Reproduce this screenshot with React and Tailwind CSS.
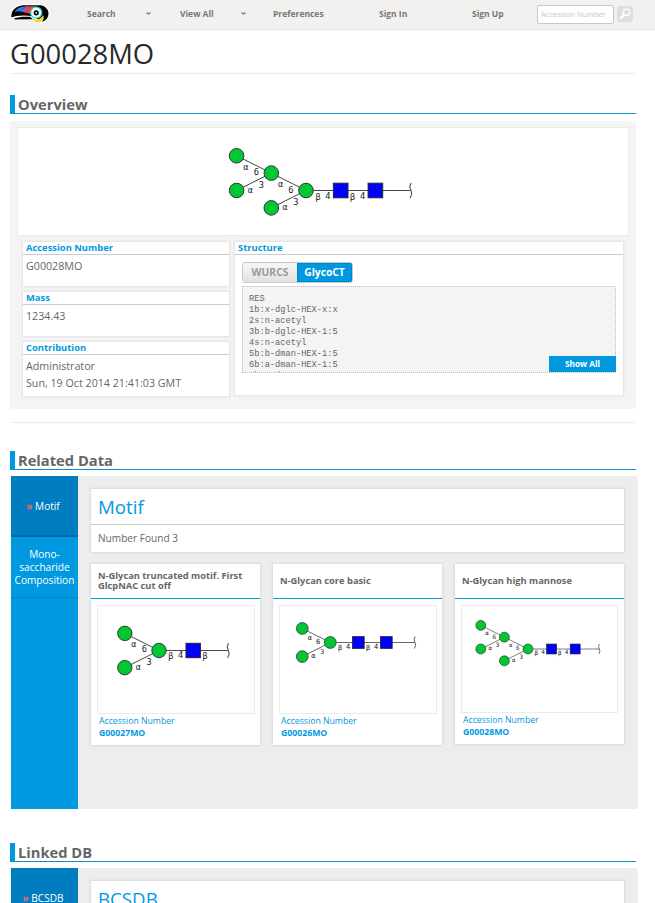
const ALPHA = "α";
const BETA = "β";

// Coordinates are relative to the core mannose at (0, 0), one residue every 34.7 units.
const branch = (x, y) => [
  { t: ALPHA, x: x - 25.5, y: y - 6.5 },
  { t: "6", x: x - 15, y: y - 1 },
  { t: ALPHA, x: x - 21, y: y + 16.5 },
  { t: "3", x: x - 10, y: y + 11.5 },
];

function Glycan({ width, height, x, y, scale, squares = 2, extended = false }) {
  const end = squares === 1 ? 70 : 104.5;
  const lines = [
    [-34.7, -17.4, 0, 0],
    [-34.7, 17.4, 0, 0],
    [0, 0, end, 0],
  ];
  const circles = [
    [-34.7, -17.4],
    [-34.7, 17.4],
    [0, 0],
  ];
  let labels = [...branch(0, 0), { t: BETA, x: 12, y: 6 }, { t: "4", x: 22, y: 5 }, { t: BETA, x: 46.7, y: 6 }];
  if (squares === 2) labels.push({ t: "4", x: 56.7, y: 5 });
  if (extended) {
    lines.push([-69.4, -34.7, -34.7, -17.4], [-69.4, 0, -34.7, -17.4]);
    circles.push([-69.4, -34.7], [-69.4, 0]);
    labels = labels.concat(branch(-34.7, -17.4));
  }
  return (
    <svg width={width} height={height} className="block">
      <g transform={`translate(${x} ${y}) scale(${scale})`}>
        {lines.map(([a, b, c, d], i) => (
          <line key={i} x1={a} y1={b} x2={c} y2={d} stroke="#444" strokeWidth="1" />
        ))}
        {circles.map(([a, b], i) => (
          <circle key={i} cx={a} cy={b} r="7.3" fill="#00c832" stroke="#333" strokeWidth="1" />
        ))}
        {Array.from({ length: squares }, (_, i) => (
          <rect key={i} x={34.7 * (i + 1) - 7.3} y="-7.3" width="14.6" height="14.6" fill="#0000fa" stroke="#223" strokeWidth="1" />
        ))}
        <path d={`M${end + 0.5} -7.5 q-2.500 4 0 7.500 q2 4 -1 7.500`} fill="none" stroke="#333" strokeWidth="1" />
        {labels.map((l, i) => (
          <text key={i} x={l.x} y={l.y + 3} textAnchor="middle" fontSize={l.t === ALPHA || l.t === BETA ? 8.6 : 8.8} fill="#222" className="font-['DejaVu_Sans_Mono',monospace]">
            {l.t}
          </text>
        ))}
      </g>
    </svg>
  );
}

function Logo() {
  return (
    <svg width="40" height="20" viewBox="0 0 40 20" className="block">
      <path d="M.5 14.500 C0 5 6 1 13 .3 L31 .3 C37 1.500 39.700 5 39.500 10 C39 15 36 18 32 19.500 L27 19 C24 17.500 22 16.800 20 16.500 L3 16 Z" fill="#fff" />
      <path d="M1.300 13.500 C1 6 6 2 13 1.200 L31 1.200 C36 2.500 38.800 6 38.500 10 C38 14.500 35.500 16.800 32.500 17.500 L22 12 C14 10.800 5 11.500 1.300 13.500 Z" fill="#050505" />
      <path d="M3.500 14.800 C8 12.800 14 12.500 20 12.800 L23 15.300 L5 15.600 Z" fill="#050505" />
      <path d="M4.500 8 C7 4 11 2.600 16 2.200 C14 4 13 5 11.500 7.500 C9 7 6.500 7 4.500 8 Z" fill="#1687e8" />
      <path d="M16 2.200 L19.500 2.200 C17.500 4 18 5.500 15.500 8.500 L10.500 7.500 C13 6.500 13.500 4 16 2.200 Z" fill="#b44cc8" />
      <path d="M19.500 2.200 L27 2.200 C23 3.500 20.500 6 20.500 10 L14.500 8.300 C17 6.500 17 4 19.500 2.200 Z" fill="#f3422d" />
      <path d="M22.500 14.500 C27 17 31 15 33 11 C35 15.500 32.500 18.300 28.500 18.300 C25 18.300 23.500 17 22.500 14.500 Z" fill="#ffd91d" />
      <circle cx="26.200" cy="8.600" r="5.600" fill="#e8ffff" stroke="#16d6df" strokeWidth="1.200" />
      <circle cx="26.200" cy="8.800" r="2.600" fill="#060606" />
      <rect x="25.500" y="8" width="1.500" height="1.500" fill="#fff" />
    </svg>
  );
}

function NavArrow() {
  return (
    <svg width="5" height="4" viewBox="0 0 5 4" className="block">
      <path d="M.5 .5 L2.500 2 L4.500 .5" fill="none" stroke="#777" strokeWidth="1.300" />
    </svg>
  );
}

function Header() {
  return (
    <header className="flex h-[30px] items-start border-b border-[#e6e5e4] bg-[#f2f1ef] text-[8.5px] font-bold leading-[12px] text-[#777]">
      <div className="ml-[10px] mt-[4px] w-[77px]"><Logo /></div>
      <div className="mt-[8px] w-[59px]">Search</div>
      <div className="mt-[12px] w-[34px]"><NavArrow /></div>
      <div className="mt-[8px] w-[61px]">View All</div>
      <div className="mt-[12px] w-[32px]"><NavArrow /></div>
      <div className="mt-[8px] w-[106px]">Preferences</div>
      <div className="mt-[8px] w-[93px]">Sign In</div>
      <div className="mt-[8px] w-[65px]">Sign Up</div>
      <div className="mt-[5px] h-[19px] w-[77px] rounded-[2px] border border-[#c8c8c8] bg-white pl-[3px] text-[7.4px] font-normal leading-[17px] text-[#c6c6c6]">Accession Number</div>
      <div className="ml-[3px] mt-[6px] flex size-[16px] items-center justify-center rounded-[2px] bg-[#dedede]">
        <svg width="12" height="12" viewBox="0 0 12 12">
          <circle cx="7.500" cy="4.300" r="3.200" fill="none" stroke="#fff" strokeWidth="1.400" />
          <path d="M5 6.800 L1 10.800" stroke="#fff" strokeWidth="2.200" />
        </svg>
      </div>
    </header>
  );
}

function Heading({ children }) {
  return (
    <h2 className="ml-[10px] h-[19px] w-[626px] border-b border-[#0a8fd0] text-[14.7px] font-bold leading-[18px] text-[#666]">
      <span className="block h-[19px] border-l-[5px] border-[#0099df] pl-[3px]">{children}</span>
    </h2>
  );
}

const cardShadow = "bg-white shadow-[0_0_2px_1px_rgba(0,0,0,0.08)]";

function Field({ title, className, children }) {
  return (
    <div className={`w-[206px] ${cardShadow} ${className}`}>
      <h3 className="h-[13px] border-b border-[#ccc] pl-[3px] text-[9.4px] font-bold leading-[12px] text-[#0099df]">{title}</h3>
      <div className="pl-[3px] pt-[3px] text-[10.7px] leading-[17px] text-[#666]">{children}</div>
    </div>
  );
}

const glycoCt = `RES
1b:x-dglc-HEX-x:x
2s:n-acetyl
3b:b-dglc-HEX-1:5
4s:n-acetyl
5b:b-dman-HEX-1:5
6b:a-dman-HEX-1:5
7b:a-dman-HEX-1:5`;

function Overview() {
  return (
    <section className="ml-[10px] mt-[7px] h-[288px] w-[626px] rounded-[3px] bg-[#f4f4f4] pt-[6px]">
      <div className="ml-[7px] h-[109px] w-[612px] border border-[#ebebeb] bg-white">
        <Glycan width={610} height={107} x={288} y={62.5} scale={1} extended />
      </div>
      <div className="ml-[13px] mt-[6px] flex gap-[6px]">
        <div className="flex flex-col gap-[6px]">
          <Field title="Accession Number" className="h-[44px]">G00028MO</Field>
          <Field title="Mass" className="h-[44px]">1234.43</Field>
          <Field title="Contribution" className="h-[54px]">Administrator<br />Sun, 19 Oct 2014 21:41:03 GMT</Field>
        </div>
        <div className={`h-[153px] w-[388px] ${cardShadow}`}>
          <h3 className="h-[13px] border-b border-[#ccc] pl-[3px] text-[9.4px] font-bold leading-[12px] text-[#0099df]">Structure</h3>
          <div className="ml-[7px] mt-[7px] flex h-[21px] w-[111px] overflow-hidden rounded-[3px] border border-[#c8c8c8] text-[10.3px] font-bold leading-[19px]">
            <div className="w-[54px] bg-linear-to-b from-[#f6f6f6] to-[#e2e2e2] text-center text-[#999]">WURCS</div>
            <div className="w-[55px] border border-[#0087c8] bg-[#0099df] text-center leading-[17px] text-white">GlycoCT</div>
          </div>
          <div className="relative ml-[7px] mt-[3px] h-[87px] w-[374px] border border-dotted border-[#bbb] bg-[#f4f4f4]">
            <pre className="h-[85px] overflow-hidden pl-[6px] pt-[7px] font-['Liberation_Mono',monospace] text-[8.7px] leading-[11px] text-[#666]">{glycoCt}</pre>
            <div className="absolute -right-px bottom-0 h-[16px] w-[67px] bg-[#0099df] text-center text-[8.3px] font-bold leading-[16px] text-white">Show All</div>
          </div>
        </div>
      </div>
    </section>
  );
}

function TitleCard({ title, children }) {
  return (
    <div className={`h-[63px] w-[533px] ${cardShadow}`}>
      <h3 className="h-[36px] border-b border-[#ccc] pl-[7px] text-[18.7px] leading-[35px] text-[#0099df]">{title}</h3>
      <p className="pl-[7px] text-[10.1px] leading-[26px] text-[#666]">{children}</p>
    </div>
  );
}

function MotifCard({ title, number, short = false, glycan }) {
  return (
    <div className={`w-[169px] ${short ? "h-[180px]" : "h-[181px]"} ${cardShadow}`}>
      <h4 className="flex h-[35px] items-center border-b border-[#0099df] pl-[7px] text-[9.3px] font-bold leading-[10px] text-[#666]">{title}</h4>
      <div className={`ml-[6px] mt-[6px] border border-[#ebebeb] ${short ? "h-[108px] w-[157px]" : "h-[109px] w-[158px]"}`}>
        <Glycan width={155} height={106} {...glycan} />
      </div>
      <div className="pl-[8px] pt-px text-[8.7px] leading-[12px] text-[#0099df]">
        <div>Accession Number</div>
        <div className="font-bold">{number}</div>
      </div>
    </div>
  );
}

function SideActive({ children }) {
  return (
    <div className="h-[61px] border-b-2 border-[#0068a8] bg-[#007dbf] pr-[3px] text-center leading-[60px]">
      <span className="font-bold text-[#ff6464]">»</span> {children}
    </div>
  );
}

export default function App() {
  return (
    <main className="h-[903px] w-[655px] overflow-hidden bg-white font-['Open_Sans',sans-serif]">
      <Header />
      <h1 className="ml-[10px] h-[44px] w-[626px] border-b border-[#ececec] text-[27.4px] leading-[47px] text-[#2a2a2a]">G00028MO</h1>
      <div className="h-[21px]" />
      <Heading>Overview</Heading>
      <Overview />
      <div className="ml-[10px] mt-[13px] h-px w-[626px] bg-[#ececec]" />
      <div className="h-[28px]" />
      <Heading>Related Data</Heading>
      <section className="ml-[11px] mt-[6px] flex h-[333px] w-[627px] rounded-r-[3px] bg-[#ededed]">
        <nav className="w-[67px] bg-[#0099df] text-[10.1px] text-white">
          <SideActive>Motif</SideActive>
          <div className="h-[61px] border-b border-[#0083c4] pt-[11px] text-center leading-[13px]">
            Mono-<br />saccharide<br />Composition
          </div>
        </nav>
        <div className="pl-[13px] pt-[13px]">
          <TitleCard title="Motif">Number Found 3</TitleCard>
          <div className="mt-[12px] flex items-start gap-[13px]">
            <MotifCard title="N-Glycan truncated motif. First GlcpNAC cut off" number="G00027MO" glycan={{ x: 61, y: 44.5, scale: 0.985, squares: 1 }} />
            <MotifCard title="N-Glycan core basic" number="G00026MO" glycan={{ x: 50.3, y: 36.5, scale: 0.807 }} />
            <MotifCard title="N-Glycan high mannose" number="G00028MO" short glycan={{ x: 66, y: 43, scale: 0.68, extended: true }} />
          </div>
        </div>
      </section>
      <div className="h-[34px]" />
      <Heading>Linked DB</Heading>
      <section className="ml-[11px] mt-[6px] flex h-[333px] w-[627px] rounded-r-[3px] bg-[#ededed]">
        <nav className="w-[67px] bg-[#0099df] text-[10.1px] text-white">
          <SideActive>BCSDB</SideActive>
        </nav>
        <div className="pl-[13px] pt-[13px]">
          <TitleCard title="BCSDB" />
        </div>
      </section>
    </main>
  );
}
